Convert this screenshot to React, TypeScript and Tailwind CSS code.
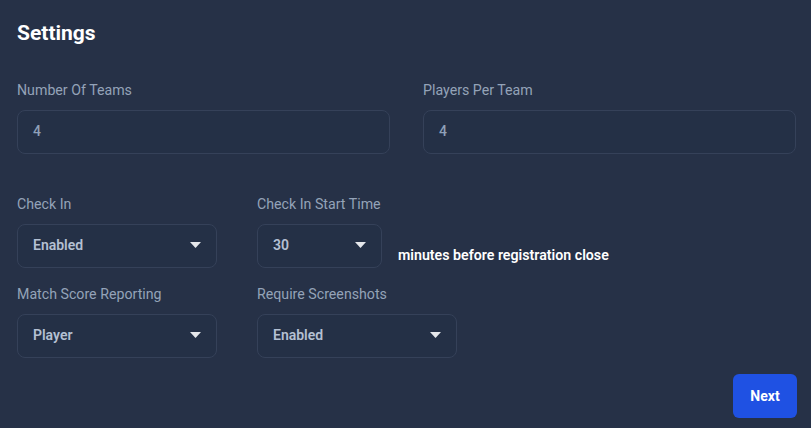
import React from 'react';

function Caret() {
  return (
    <svg width="11" height="6" viewBox="0 0 11 6" className="shrink-0">
      <path d="M0 0 L11 0 L5.5 6 Z" fill="#e5e7eb" />
    </svg>
  );
}

function TextField({ label, value }: { label: string; value: string }) {
  return (
    <div className="flex-1">
      <p className="text-[14.2px] text-[#94a3b8] mb-[10px] leading-5">{label}</p>
      <div className="h-[44px] rounded-lg border border-[#354159] bg-[#243046] px-[15px] pb-[2px] flex items-center text-sm font-medium text-[#8fa0b8]">
        {value}
      </div>
    </div>
  );
}

function SelectField({ label, value, width }: { label: string; value: string; width: string }) {
  return (
    <div className={width}>
      <p className="text-[14.2px] text-[#94a3b8] mb-[10px] leading-5">{label}</p>
      <div className="h-[44px] rounded-lg border border-[#354159] bg-[#243046] pl-[15px] pr-[15px] pb-[3px] flex items-center justify-between text-sm font-semibold text-[#b4c0d3]">
        <span>{value}</span>
        <Caret />
      </div>
    </div>
  );
}

export default function App() {
  return (
    <div
      className="w-[811px] h-[428px] bg-[#263147] pl-[17px] pr-[15px] pt-[19px] flex flex-col"
      style={{ fontFamily: 'Roboto, "Liberation Sans", sans-serif' }}
    >
      <h1 className="text-[21px] font-bold text-white leading-7">Settings</h1>

      <div className="flex gap-[33px] mt-[33px]">
        <TextField label="Number Of Teams" value="4" />
        <TextField label="Players Per Team" value="4" />
      </div>

      <div className="flex items-end gap-[40px] mt-[40px]">
        <SelectField label="Check In" value="Enabled" width="w-[200px]" />
        <div className="flex items-end gap-[16px]">
          <SelectField label="Check In Start Time" value="30" width="w-[125px]" />
          <span className="text-[14.2px] font-semibold text-white mb-[2px]">minutes before registration close</span>
        </div>
      </div>

      <div className="flex gap-[40px] mt-[16px]">
        <SelectField label="Match Score Reporting" value="Player" width="w-[200px]" />
        <SelectField label="Require Screenshots" value="Enabled" width="w-[200px]" />
      </div>

      <div className="flex justify-end mt-[16px]">
        <button className="h-[44px] w-[64px] -mr-px rounded-md bg-[#1f51e3] text-sm font-bold text-white">
          Next
        </button>
      </div>
    </div>
  );
}
